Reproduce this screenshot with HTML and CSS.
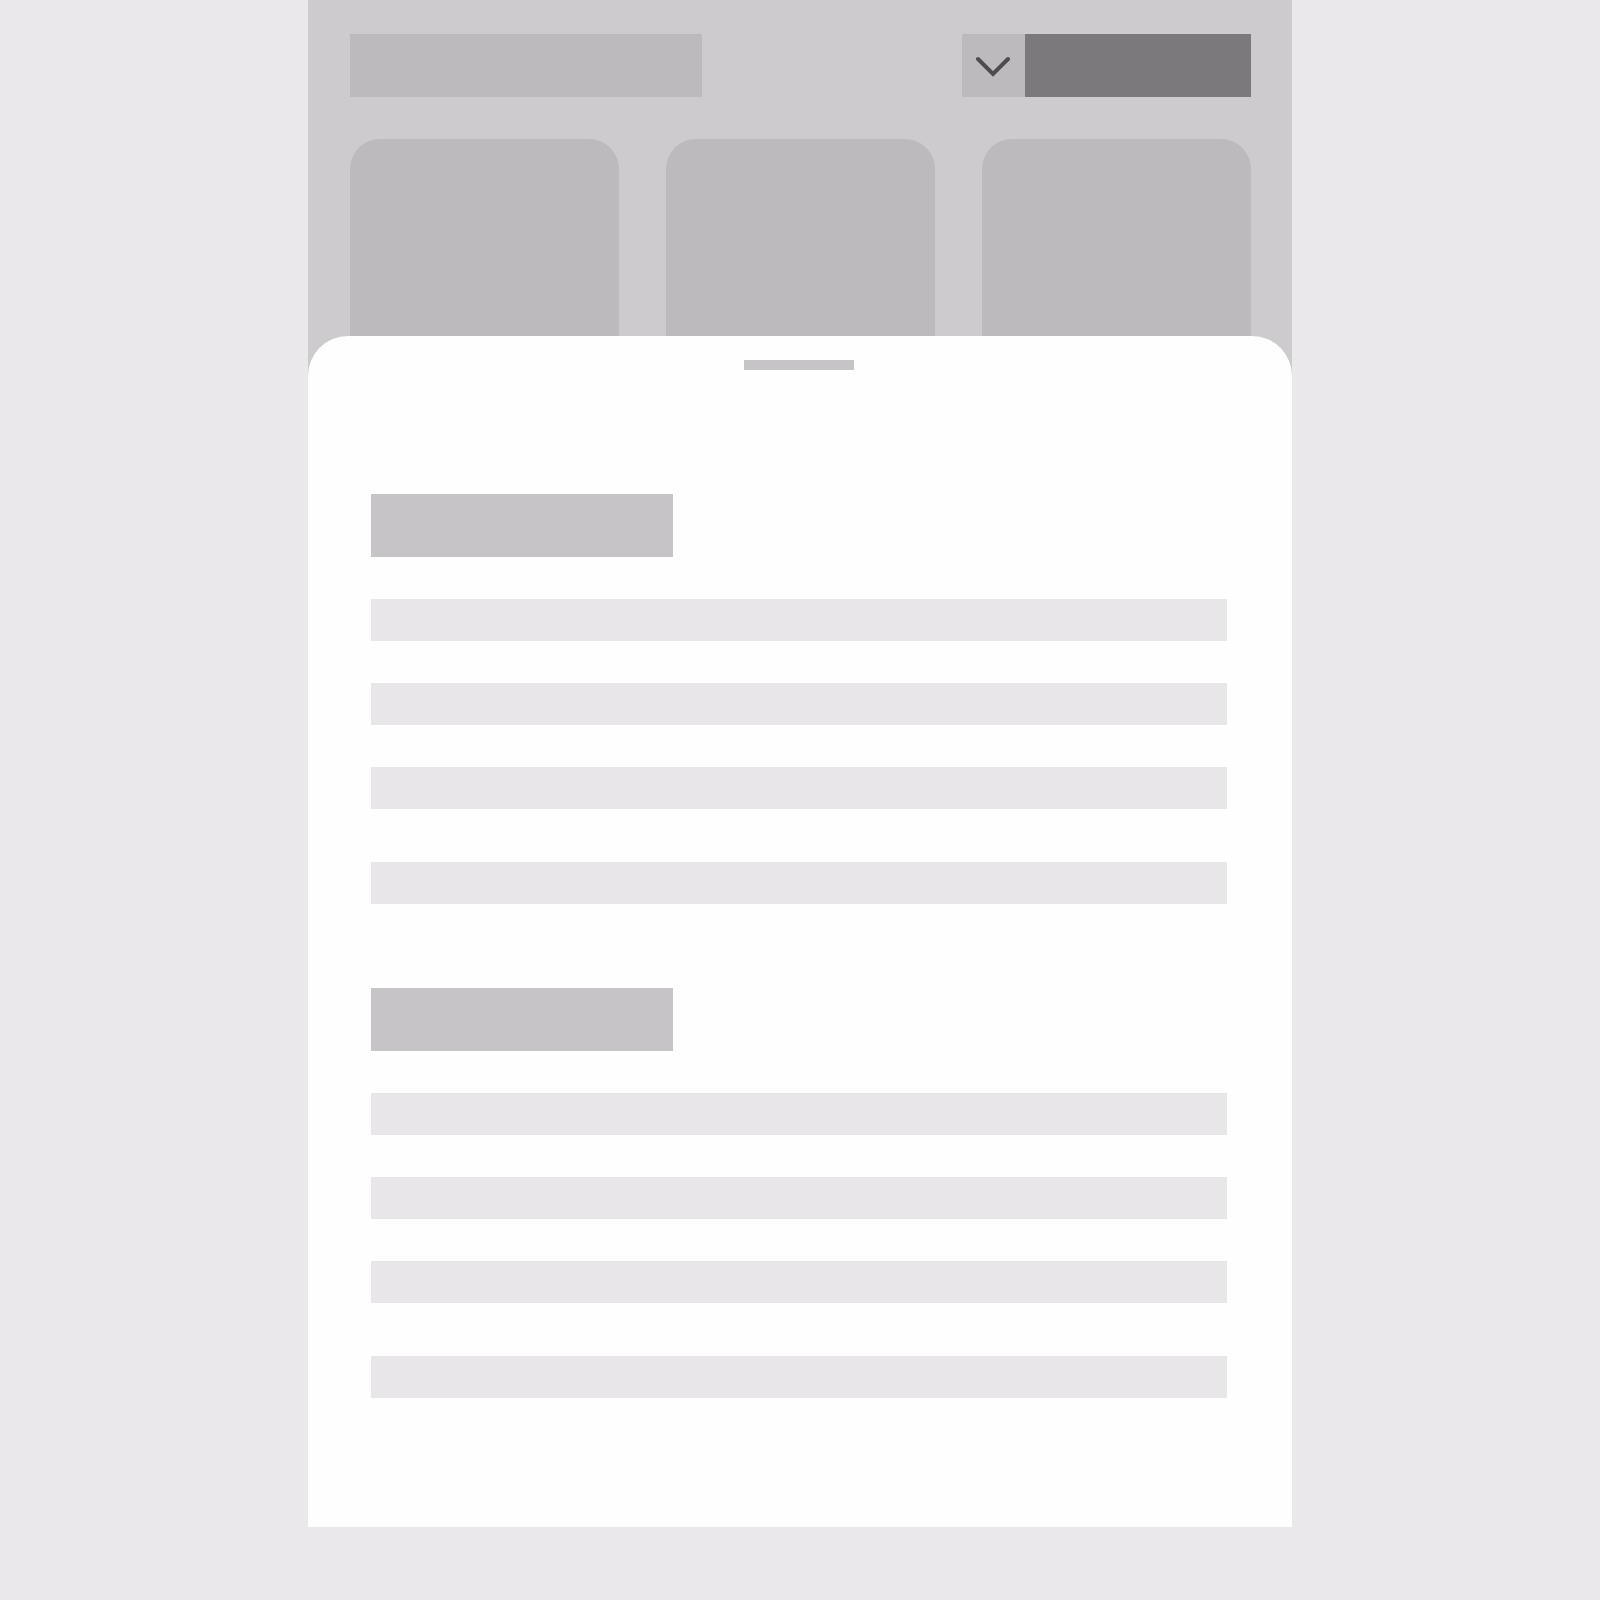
FILE: index.html
```html
<!DOCTYPE html>
<html lang="en">
<head>
    <meta charset="UTF-8">
    <meta name="viewport" content="width=device-width, initial-scale=1.0">
    <title>Bottom sheet wireframe</title>
    <link rel="stylesheet" href="styles.css">
</head>
<body>
    <div class="frame">
        <div class="top">
            <div class="toolbar">
                <div class="search"></div>
                <div class="select">
                    <div class="select-toggle">
                        <svg width="36" height="24" viewBox="0 0 36 24">
                            <polyline points="2,4 17,19 32,4" fill="none" stroke="#4f4c51" stroke-width="4" stroke-linecap="round" stroke-linejoin="miter"/>
                        </svg>
                    </div>
                    <div class="select-value"></div>
                </div>
            </div>
            <div class="cards">
                <div class="card"></div>
                <div class="card"></div>
                <div class="card"></div>
            </div>
        </div>

        <div class="sheet">
            <div class="handle"></div>

            <div class="section">
                <div class="heading"></div>
                <div class="line"></div>
                <div class="line"></div>
                <div class="line"></div>
                <div class="line last"></div>
            </div>

            <div class="section">
                <div class="heading"></div>
                <div class="line"></div>
                <div class="line"></div>
                <div class="line"></div>
                <div class="line last"></div>
            </div>
        </div>
    </div>
</body>
</html>
```

FILE: styles.css
```css
body {
    margin: 0;
    background-color: #eae8eb;
    font-family: "Liberation Sans", Arial, sans-serif;
}
.frame {
    width: 984px;
    margin: 0 auto;
    background-color: #cdcbce;
}
.top {
    height: 336px;
    overflow: hidden;
    padding: 34px 41px 0 42px;
    box-sizing: border-box;
}
.toolbar {
    display: flex;
    justify-content: space-between;
    height: 63px;
}
.search {
    width: 352px;
    background-color: #bcbabd;
}
.select {
    display: flex;
}
.select-toggle {
    width: 63px;
    background-color: #bcbabd;
    display: flex;
    align-items: center;
    justify-content: center;
}
.select-toggle svg {
    display: block;
    margin-top: 2px;
}
.select-value {
    width: 226px;
    background-color: #7b797c;
}
.cards {
    display: grid;
    grid-template-columns: repeat(3, 1fr);
    gap: 47px;
    margin-top: 42px;
}
.card {
    height: 320px;
    background-color: #bcbabd;
    border-radius: 30px;
}
.sheet {
    background-color: #fefefe;
    border-radius: 40px 40px 0 0;
    padding: 24px 65px 129px 63px;
}
.handle {
    width: 110px;
    height: 10px;
    margin: 0 auto;
    background-color: #c6c4c7;
}
.section {
    margin-top: 84px;
}
.handle + .section {
    margin-top: 124px;
}
.heading {
    width: 302px;
    height: 63px;
    background-color: #c6c4c7;
}
.line {
    height: 42px;
    margin-top: 42px;
    background-color: #e8e6e9;
}
.line.last {
    margin-top: 53px;
}
```
